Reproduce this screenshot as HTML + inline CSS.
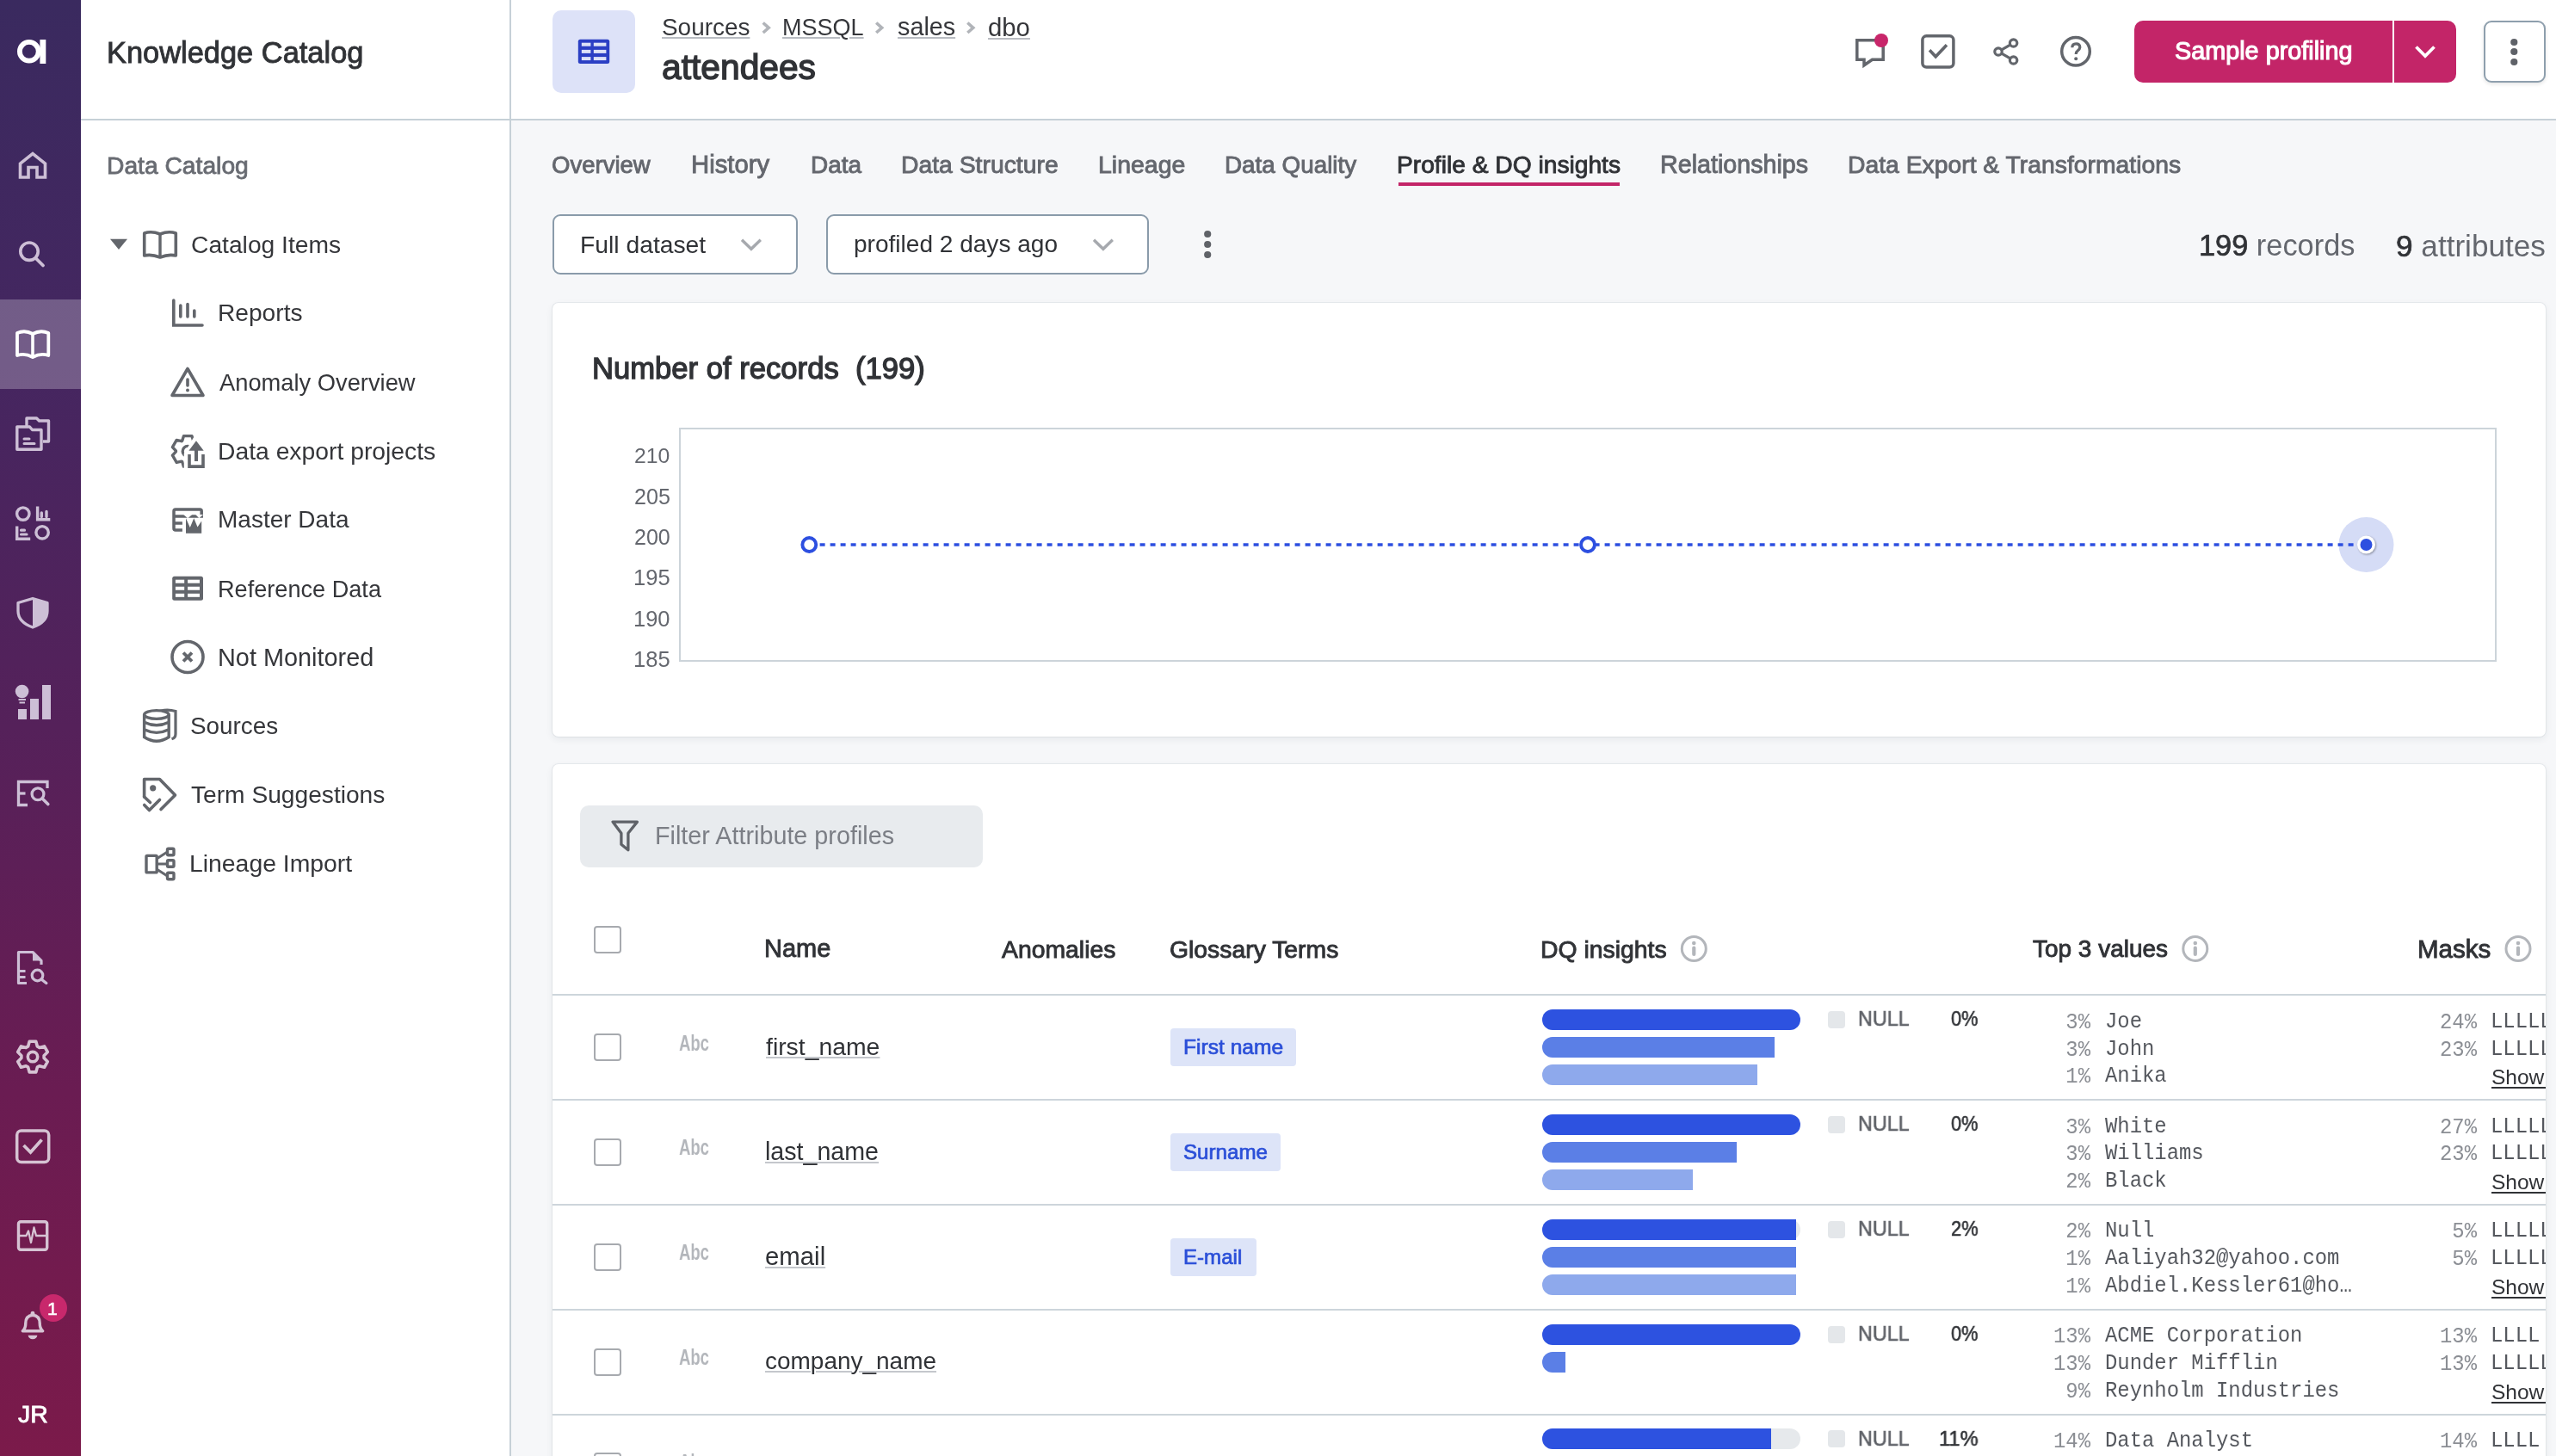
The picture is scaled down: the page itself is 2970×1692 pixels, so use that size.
<!DOCTYPE html>
<html><head><meta charset="utf-8"><style>
html,body{margin:0;padding:0;width:2970px;height:1692px;overflow:hidden;background:#f6f7f9;}
.t{position:absolute;line-height:1;white-space:nowrap;will-change:transform;}
</style></head><body>
<div style="position:absolute;left:0px;top:0px;width:94px;height:1692px;background:linear-gradient(180deg,#3a2a5f 0%,#452660 25%,#55215a 50%,#6a1c52 75%,#7b1a4a 100%)"></div><div style="position:absolute;left:0px;top:348px;width:94px;height:104px;background:rgba(255,255,255,0.25)"></div><div style="position:absolute;left:21px;top:823.5px;width:10px;height:12.5px;background:#cdbfd6"></div><div style="position:absolute;left:35px;top:812px;width:9.5px;height:24px;background:#cdbfd6"></div><div style="position:absolute;left:49px;top:796px;width:9.5px;height:40px;background:#cdbfd6"></div><div style="position:absolute;left:45.8px;top:1503.8px;width:32px;height:32px;background:#c8286c;border-radius:50%"></div><div class="t" style="left:55.01px;top:1509.62px;font-size:21.00px;color:#fff;font-weight:400;font-family:'Liberation Sans';-webkit-text-stroke:0.6px #fff;transform:scaleX(1.0071);transform-origin:0 0;">1</div><div class="t" style="left:20.57px;top:1628.92px;font-size:28.45px;color:#fff;font-weight:400;font-family:'Liberation Sans';-webkit-text-stroke:0.8px #fff;">JR</div><div style="position:absolute;left:94px;top:0px;width:499px;height:1692px;background:#fff"></div><div style="position:absolute;left:592px;top:0px;width:2px;height:1692px;background:#c6d0d7"></div><div style="position:absolute;left:94px;top:138px;width:499px;height:2px;background:#c6d0d7"></div><div class="t" style="left:123.65px;top:43.66px;font-size:34.42px;color:#303236;font-weight:400;font-family:'Liberation Sans';-webkit-text-stroke:0.9px #303236;">Knowledge Catalog</div><div class="t" style="left:124.14px;top:178.09px;font-size:28.24px;color:#686b72;font-weight:400;font-family:'Liberation Sans';-webkit-text-stroke:0.8px #686b72;">Data Catalog</div><div class="t" style="left:221.59px;top:270.10px;font-size:28.23px;color:#35363a;font-weight:400;font-family:'Liberation Sans';">Catalog Items</div><div class="t" style="left:252.75px;top:350.17px;font-size:28.15px;color:#35363a;font-weight:400;font-family:'Liberation Sans';">Reports</div><div class="t" style="left:255.00px;top:430.89px;font-size:27.30px;color:#35363a;font-weight:400;font-family:'Liberation Sans';">Anomaly Overview</div><div class="t" style="left:252.74px;top:509.64px;font-size:28.30px;color:#35363a;font-weight:400;font-family:'Liberation Sans';">Data export projects</div><div class="t" style="left:252.76px;top:590.30px;font-size:28.00px;color:#35363a;font-weight:400;font-family:'Liberation Sans';">Master Data</div><div class="t" style="left:252.83px;top:670.53px;font-size:27.13px;color:#35363a;font-weight:400;font-family:'Liberation Sans';">Reference Data</div><div class="t" style="left:252.69px;top:749.56px;font-size:28.87px;color:#35363a;font-weight:400;font-family:'Liberation Sans';">Not Monitored</div><div style="position:absolute;left:226.1px;top:523px;width:3.7px;height:13px;background:#63666c"></div><div class="t" style="left:221.25px;top:830.42px;font-size:27.86px;color:#35363a;font-weight:400;font-family:'Liberation Sans';">Sources</div><div class="t" style="left:221.94px;top:909.76px;font-size:28.16px;color:#35363a;font-weight:400;font-family:'Liberation Sans';">Term Suggestions</div><div class="t" style="left:220.23px;top:989.48px;font-size:28.37px;color:#35363a;font-weight:400;font-family:'Liberation Sans';">Lineage Import</div><div style="position:absolute;left:594px;top:0px;width:2376px;height:138px;background:#fff"></div><div style="position:absolute;left:594px;top:138px;width:2376px;height:2px;background:#c6d0d7"></div><div style="position:absolute;left:594px;top:140px;width:2376px;height:1552px;background:#f6f7f9"></div><div style="position:absolute;left:642px;top:12px;width:96px;height:96px;background:#dde2f8;border-radius:10px"></div><div class="t" style="left:769.14px;top:18.17px;font-size:27.91px;color:#35363a;font-weight:400;font-family:'Liberation Sans';text-decoration:underline;text-decoration-color:#b9bcc2;text-underline-offset:2px;text-decoration-thickness:1.5px;">Sources</div><div class="t" style="left:909.04px;top:18.93px;font-size:27.02px;color:#35363a;font-weight:400;font-family:'Liberation Sans';text-decoration:underline;text-decoration-color:#b9bcc2;text-underline-offset:2px;text-decoration-thickness:1.5px;">MSSQL</div><div class="t" style="left:1042.74px;top:17.45px;font-size:28.77px;color:#35363a;font-weight:400;font-family:'Liberation Sans';text-decoration:underline;text-decoration-color:#b9bcc2;text-underline-offset:2px;text-decoration-thickness:1.5px;">sales</div><div class="t" style="left:1148.03px;top:16.96px;font-size:29.34px;color:#35363a;font-weight:400;font-family:'Liberation Sans';text-decoration:underline;text-decoration-color:#b9bcc2;text-underline-offset:2px;text-decoration-thickness:1.5px;">dbo</div><div class="t" style="left:769.17px;top:58.20px;font-size:40.76px;color:#303236;font-weight:400;font-family:'Liberation Sans';-webkit-text-stroke:1.4px #303236;">attendees</div><div style="position:absolute;left:2480px;top:24px;width:374px;height:72px;background:#c32568;border-radius:10px"></div><div style="position:absolute;left:2779.5px;top:24px;width:2px;height:72px;background:#fff"></div><div class="t" style="left:2527.00px;top:44.82px;font-size:28.80px;color:#ffffff;font-weight:400;font-family:'Liberation Sans';-webkit-text-stroke:1.1px #ffffff;">Sample profiling</div><div style="position:absolute;left:2886px;top:24px;width:72px;height:72px;background:#fff;border:2px solid #8e9fad;border-radius:9px;box-sizing:border-box;box-shadow:0 2px 4px rgba(0,0,0,0.10)"></div><div class="t" style="left:641.46px;top:178.00px;font-size:27.52px;color:#64676e;font-weight:400;font-family:'Liberation Sans';-webkit-text-stroke:0.9px #64676e;">Overview</div><div class="t" style="left:803.36px;top:176.52px;font-size:29.27px;color:#64676e;font-weight:400;font-family:'Liberation Sans';-webkit-text-stroke:0.9px #64676e;">History</div><div class="t" style="left:941.57px;top:177.66px;font-size:27.93px;color:#64676e;font-weight:400;font-family:'Liberation Sans';-webkit-text-stroke:0.9px #64676e;">Data</div><div class="t" style="left:1047.33px;top:177.31px;font-size:28.34px;color:#64676e;font-weight:400;font-family:'Liberation Sans';-webkit-text-stroke:0.9px #64676e;">Data Structure</div><div class="t" style="left:1276.02px;top:177.20px;font-size:28.47px;color:#64676e;font-weight:400;font-family:'Liberation Sans';-webkit-text-stroke:0.9px #64676e;">Lineage</div><div class="t" style="left:1422.77px;top:177.72px;font-size:27.85px;color:#64676e;font-weight:400;font-family:'Liberation Sans';-webkit-text-stroke:0.9px #64676e;">Data Quality</div><div class="t" style="left:1622.74px;top:177.43px;font-size:28.20px;color:#303236;font-weight:400;font-family:'Liberation Sans';-webkit-text-stroke:0.9px #303236;">Profile &amp; DQ insights</div><div class="t" style="left:1928.51px;top:177.02px;font-size:28.68px;color:#64676e;font-weight:400;font-family:'Liberation Sans';-webkit-text-stroke:0.9px #64676e;">Relationships</div><div class="t" style="left:2146.93px;top:177.33px;font-size:28.32px;color:#64676e;font-weight:400;font-family:'Liberation Sans';-webkit-text-stroke:0.9px #64676e;">Data Export &amp; Transformations</div><div style="position:absolute;left:1625px;top:212px;width:257px;height:4px;background:#c32568"></div><div style="position:absolute;left:642px;top:248.6px;width:285px;height:70.7px;background:#fff;border:2px solid #8a9baa;border-radius:9px;box-sizing:border-box"></div><div class="t" style="left:674.24px;top:269.55px;font-size:28.29px;color:#303236;font-weight:400;font-family:'Liberation Sans';">Full dataset</div><div style="position:absolute;left:959.6px;top:248.6px;width:375px;height:70.7px;background:#fff;border:2px solid #8a9baa;border-radius:9px;box-sizing:border-box"></div><div class="t" style="left:992.18px;top:269.76px;font-size:28.05px;color:#303236;font-weight:400;font-family:'Liberation Sans';">profiled 2 days ago</div><div class="t" style="left:2555.42px;top:268.21px;font-size:34.37px;color:#64676e;font-weight:400;font-family:'Liberation Sans';"><span style="color:#303236;-webkit-text-stroke:0.7px #303236">199</span> records</div><div class="t" style="left:2784.42px;top:267.53px;font-size:35.17px;color:#64676e;font-weight:400;font-family:'Liberation Sans';"><span style="color:#303236;-webkit-text-stroke:0.7px #303236">9</span> attributes</div><div style="position:absolute;left:642px;top:352px;width:2316px;height:504px;background:#fff;border-radius:7px;box-shadow:0 0 0 1px rgba(60,80,100,0.07),0 3px 9px rgba(40,60,80,0.08)"></div><div class="t" style="left:687.73px;top:410.69px;font-size:34.63px;color:#303236;font-weight:400;font-family:'Liberation Sans';-webkit-text-stroke:1.3px #303236;">Number of records&nbsp; (199)</div><div style="position:absolute;left:789px;top:497px;width:2112px;height:272px;border:2px solid #ccd4da;box-sizing:border-box"></div><div class="t" style="left:737.26px;top:517.55px;font-size:24.75px;color:#64676e;font-weight:400;font-family:'Liberation Sans';">210</div><div class="t" style="left:736.74px;top:564.72px;font-size:25.14px;color:#64676e;font-weight:400;font-family:'Liberation Sans';">205</div><div class="t" style="left:736.75px;top:612.29px;font-size:25.06px;color:#64676e;font-weight:400;font-family:'Liberation Sans';">200</div><div class="t" style="left:736.08px;top:659.37px;font-size:25.55px;color:#64676e;font-weight:400;font-family:'Liberation Sans';">195</div><div class="t" style="left:736.09px;top:706.94px;font-size:25.47px;color:#64676e;font-weight:400;font-family:'Liberation Sans';">190</div><div class="t" style="left:736.08px;top:754.37px;font-size:25.55px;color:#64676e;font-weight:400;font-family:'Liberation Sans';">185</div><div style="position:absolute;left:642px;top:888px;width:2316px;height:900px;background:#fff;border-radius:7px;box-shadow:0 0 0 1px rgba(60,80,100,0.07),0 3px 9px rgba(40,60,80,0.08);overflow:hidden"><div style="position:absolute;left:32px;top:48px;width:468px;height:72px;background:#e8ebee;border-radius:10px"></div><div class="t" style="left:118.70px;top:68.96px;font-size:28.75px;color:#7b7e85;font-weight:400;font-family:'Liberation Sans';">Filter Attribute profiles</div><div style="position:absolute;left:48px;top:188px;width:32px;height:32px;border:2px solid #a7aaaf;border-radius:4px;box-sizing:border-box"></div><div class="t" style="left:246.28px;top:200.47px;font-size:28.98px;color:#303236;font-weight:400;font-family:'Liberation Sans';-webkit-text-stroke:0.9px #303236;">Name</div><div class="t" style="left:521.70px;top:200.98px;font-size:28.37px;color:#303236;font-weight:400;font-family:'Liberation Sans';-webkit-text-stroke:0.9px #303236;">Anomalies</div><div class="t" style="left:717.38px;top:201.00px;font-size:28.35px;color:#303236;font-weight:400;font-family:'Liberation Sans';-webkit-text-stroke:0.9px #303236;">Glossary Terms</div><div class="t" style="left:1147.63px;top:200.98px;font-size:28.37px;color:#303236;font-weight:400;font-family:'Liberation Sans';-webkit-text-stroke:0.9px #303236;">DQ insights</div><div class="t" style="left:1720.44px;top:201.32px;font-size:27.97px;color:#303236;font-weight:400;font-family:'Liberation Sans';-webkit-text-stroke:0.9px #303236;">Top 3 values</div><div class="t" style="left:2166.64px;top:199.99px;font-size:29.55px;color:#303236;font-weight:400;font-family:'Liberation Sans';-webkit-text-stroke:0.9px #303236;">Masks</div><div style="position:absolute;left:0px;top:267px;width:2316px;height:2px;background:#cdd5db"></div><div style="position:absolute;left:48px;top:313.0px;width:32px;height:32px;border:2px solid #a7aaaf;border-radius:4px;box-sizing:border-box"></div><div class="t" style="left:146.80px;top:311.64px;font-size:25.00px;color:#b3b6bb;font-weight:700;font-family:'Liberation Sans';transform:scaleX(0.74);transform-origin:0 0">Abc</div><div class="t" style="left:248.17px;top:314.29px;font-size:28.36px;color:#303236;font-weight:400;font-family:'Liberation Sans';text-decoration:underline;text-decoration-color:#c4c7cc;text-underline-offset:1.5px;text-decoration-thickness:1.6px">first_name</div><div style="position:absolute;left:718px;top:307.0px;width:146px;height:44px;background:#dde4f8;border-radius:4px"></div><div class="t" style="left:732.73px;top:317.17px;font-size:24.61px;color:#2b4fd8;font-weight:400;font-family:'Liberation Sans';-webkit-text-stroke:0.7px #2b4fd8;">First name</div><div style="position:absolute;left:1150px;top:285.0px;width:300px;height:24px;background:#2d52e0;border-radius:12px"></div><div style="position:absolute;left:1150px;top:317.0px;width:270px;height:24px;background:#5b7fe6;border-radius:12px 0 0 12px"></div><div style="position:absolute;left:1150px;top:349.0px;width:250px;height:24px;background:#8ea9ec;border-radius:12px 0 0 12px"></div><div style="position:absolute;left:1482px;top:287.0px;width:20px;height:20px;background:#e4e7ea;border-radius:4px"></div><div class="t" style="left:1517.03px;top:284.26px;font-size:24.50px;color:#5f6268;font-weight:400;font-family:'Liberation Sans';-webkit-text-stroke:0.6px #5f6268;transform:scaleX(0.9515);transform-origin:0 0;">NULL</div><div class="t" style="left:1624.93px;top:284.26px;font-size:24.50px;color:#303236;font-weight:400;font-family:'Liberation Sans';-webkit-text-stroke:0.6px #303236;transform:scaleX(0.8849);transform-origin:0 0;">0%</div><div class="t" style="left:1787.00px;top:287.69px;font-size:23.90px;color:#8b8e94;font-weight:400;font-family:'Liberation Mono';width:0;transform:scaleY(1.07);transform-origin:0 76.65%"><span style="position:absolute;right:0">3%</span></div><div class="t" style="left:1803.80px;top:287.69px;font-size:23.90px;color:#55585e;font-weight:400;font-family:'Liberation Mono';transform:scaleY(1.07);transform-origin:0 76.65%">Joe</div><div class="t" style="left:1787.00px;top:319.54px;font-size:23.90px;color:#8b8e94;font-weight:400;font-family:'Liberation Mono';width:0;transform:scaleY(1.07);transform-origin:0 76.65%"><span style="position:absolute;right:0">3%</span></div><div class="t" style="left:1803.80px;top:319.54px;font-size:23.90px;color:#55585e;font-weight:400;font-family:'Liberation Mono';transform:scaleY(1.07);transform-origin:0 76.65%">John</div><div class="t" style="left:1787.00px;top:351.39px;font-size:23.90px;color:#8b8e94;font-weight:400;font-family:'Liberation Mono';width:0;transform:scaleY(1.07);transform-origin:0 76.65%"><span style="position:absolute;right:0">1%</span></div><div class="t" style="left:1803.80px;top:351.39px;font-size:23.90px;color:#55585e;font-weight:400;font-family:'Liberation Mono';transform:scaleY(1.07);transform-origin:0 76.65%">Anika</div><div class="t" style="left:2235.50px;top:287.69px;font-size:23.90px;color:#8b8e94;font-weight:400;font-family:'Liberation Mono';width:0;transform:scaleY(1.07);transform-origin:0 76.65%"><span style="position:absolute;right:0">24%</span></div><div class="t" style="left:2251.80px;top:287.69px;font-size:23.90px;color:#55585e;font-weight:400;font-family:'Liberation Mono';transform:scaleY(1.07);transform-origin:0 76.65%">LLLLL</div><div class="t" style="left:2235.50px;top:319.54px;font-size:23.90px;color:#8b8e94;font-weight:400;font-family:'Liberation Mono';width:0;transform:scaleY(1.07);transform-origin:0 76.65%"><span style="position:absolute;right:0">23%</span></div><div class="t" style="left:2251.80px;top:319.54px;font-size:23.90px;color:#55585e;font-weight:400;font-family:'Liberation Mono';transform:scaleY(1.07);transform-origin:0 76.65%">LLLLL</div><div class="t" style="left:2253.00px;top:351.96px;font-size:24.50px;color:#303236;font-weight:400;font-family:'Liberation Sans';text-decoration:underline;text-underline-offset:3px;text-decoration-thickness:2px">Show more</div><div style="position:absolute;left:0px;top:389.0px;width:2316px;height:2px;background:#cdd5db"></div><div style="position:absolute;left:48px;top:434.8499999999999px;width:32px;height:32px;border:2px solid #a7aaaf;border-radius:4px;box-sizing:border-box"></div><div class="t" style="left:146.80px;top:433.49px;font-size:25.00px;color:#b3b6bb;font-weight:700;font-family:'Liberation Sans';transform:scaleX(0.74);transform-origin:0 0">Abc</div><div class="t" style="left:246.74px;top:435.93px;font-size:28.61px;color:#303236;font-weight:400;font-family:'Liberation Sans';text-decoration:underline;text-decoration-color:#c4c7cc;text-underline-offset:1.5px;text-decoration-thickness:1.6px">last_name</div><div style="position:absolute;left:718px;top:428.8499999999999px;width:128px;height:44px;background:#dde4f8;border-radius:4px"></div><div class="t" style="left:733.31px;top:439.40px;font-size:24.16px;color:#2b4fd8;font-weight:400;font-family:'Liberation Sans';-webkit-text-stroke:0.7px #2b4fd8;">Surname</div><div style="position:absolute;left:1150px;top:406.8499999999999px;width:300px;height:24px;background:#2d52e0;border-radius:12px"></div><div style="position:absolute;left:1150px;top:438.8499999999999px;width:226px;height:24px;background:#5b7fe6;border-radius:12px 0 0 12px"></div><div style="position:absolute;left:1150px;top:470.8499999999999px;width:175px;height:24px;background:#8ea9ec;border-radius:12px 0 0 12px"></div><div style="position:absolute;left:1482px;top:408.8499999999999px;width:20px;height:20px;background:#e4e7ea;border-radius:4px"></div><div class="t" style="left:1517.03px;top:406.11px;font-size:24.50px;color:#5f6268;font-weight:400;font-family:'Liberation Sans';-webkit-text-stroke:0.6px #5f6268;transform:scaleX(0.9515);transform-origin:0 0;">NULL</div><div class="t" style="left:1624.93px;top:406.11px;font-size:24.50px;color:#303236;font-weight:400;font-family:'Liberation Sans';-webkit-text-stroke:0.6px #303236;transform:scaleX(0.8849);transform-origin:0 0;">0%</div><div class="t" style="left:1787.00px;top:409.54px;font-size:23.90px;color:#8b8e94;font-weight:400;font-family:'Liberation Mono';width:0;transform:scaleY(1.07);transform-origin:0 76.65%"><span style="position:absolute;right:0">3%</span></div><div class="t" style="left:1803.80px;top:409.54px;font-size:23.90px;color:#55585e;font-weight:400;font-family:'Liberation Mono';transform:scaleY(1.07);transform-origin:0 76.65%">White</div><div class="t" style="left:1787.00px;top:441.39px;font-size:23.90px;color:#8b8e94;font-weight:400;font-family:'Liberation Mono';width:0;transform:scaleY(1.07);transform-origin:0 76.65%"><span style="position:absolute;right:0">3%</span></div><div class="t" style="left:1803.80px;top:441.39px;font-size:23.90px;color:#55585e;font-weight:400;font-family:'Liberation Mono';transform:scaleY(1.07);transform-origin:0 76.65%">Williams</div><div class="t" style="left:1787.00px;top:473.24px;font-size:23.90px;color:#8b8e94;font-weight:400;font-family:'Liberation Mono';width:0;transform:scaleY(1.07);transform-origin:0 76.65%"><span style="position:absolute;right:0">2%</span></div><div class="t" style="left:1803.80px;top:473.24px;font-size:23.90px;color:#55585e;font-weight:400;font-family:'Liberation Mono';transform:scaleY(1.07);transform-origin:0 76.65%">Black</div><div class="t" style="left:2235.50px;top:409.54px;font-size:23.90px;color:#8b8e94;font-weight:400;font-family:'Liberation Mono';width:0;transform:scaleY(1.07);transform-origin:0 76.65%"><span style="position:absolute;right:0">27%</span></div><div class="t" style="left:2251.80px;top:409.54px;font-size:23.90px;color:#55585e;font-weight:400;font-family:'Liberation Mono';transform:scaleY(1.07);transform-origin:0 76.65%">LLLLL</div><div class="t" style="left:2235.50px;top:441.39px;font-size:23.90px;color:#8b8e94;font-weight:400;font-family:'Liberation Mono';width:0;transform:scaleY(1.07);transform-origin:0 76.65%"><span style="position:absolute;right:0">23%</span></div><div class="t" style="left:2251.80px;top:441.39px;font-size:23.90px;color:#55585e;font-weight:400;font-family:'Liberation Mono';transform:scaleY(1.07);transform-origin:0 76.65%">LLLLL</div><div class="t" style="left:2253.00px;top:473.81px;font-size:24.50px;color:#303236;font-weight:400;font-family:'Liberation Sans';text-decoration:underline;text-underline-offset:3px;text-decoration-thickness:2px">Show more</div><div style="position:absolute;left:0px;top:510.8499999999999px;width:2316px;height:2px;background:#cdd5db"></div><div style="position:absolute;left:48px;top:556.7px;width:32px;height:32px;border:2px solid #a7aaaf;border-radius:4px;box-sizing:border-box"></div><div class="t" style="left:146.80px;top:555.34px;font-size:25.00px;color:#b3b6bb;font-weight:700;font-family:'Liberation Sans';transform:scaleX(0.74);transform-origin:0 0">Abc</div><div class="t" style="left:247.43px;top:557.14px;font-size:29.37px;color:#303236;font-weight:400;font-family:'Liberation Sans';text-decoration:underline;text-decoration-color:#c4c7cc;text-underline-offset:1.5px;text-decoration-thickness:1.6px">email</div><div style="position:absolute;left:718px;top:550.7px;width:100px;height:44px;background:#dde4f8;border-radius:4px"></div><div class="t" style="left:733.47px;top:561.30px;font-size:24.10px;color:#2b4fd8;font-weight:400;font-family:'Liberation Sans';-webkit-text-stroke:0.7px #2b4fd8;">E-mail</div><div style="position:absolute;left:1150px;top:528.7px;width:300px;height:24px;background:#e6e9ec;border-radius:12px"></div><div style="position:absolute;left:1150px;top:528.7px;width:295px;height:24px;background:#2d52e0;border-radius:12px 0 0 12px"></div><div style="position:absolute;left:1150px;top:560.7px;width:295px;height:24px;background:#5b7fe6;border-radius:12px 0 0 12px"></div><div style="position:absolute;left:1150px;top:592.7px;width:295px;height:24px;background:#8ea9ec;border-radius:12px 0 0 12px"></div><div style="position:absolute;left:1482px;top:530.7px;width:20px;height:20px;background:#e4e7ea;border-radius:4px"></div><div class="t" style="left:1517.03px;top:527.96px;font-size:24.50px;color:#5f6268;font-weight:400;font-family:'Liberation Sans';-webkit-text-stroke:0.6px #5f6268;transform:scaleX(0.9515);transform-origin:0 0;">NULL</div><div class="t" style="left:1624.71px;top:527.96px;font-size:24.50px;color:#303236;font-weight:400;font-family:'Liberation Sans';-webkit-text-stroke:0.6px #303236;transform:scaleX(0.8914);transform-origin:0 0;">2%</div><div class="t" style="left:1787.00px;top:531.39px;font-size:23.90px;color:#8b8e94;font-weight:400;font-family:'Liberation Mono';width:0;transform:scaleY(1.07);transform-origin:0 76.65%"><span style="position:absolute;right:0">2%</span></div><div class="t" style="left:1803.80px;top:531.39px;font-size:23.90px;color:#55585e;font-weight:400;font-family:'Liberation Mono';transform:scaleY(1.07);transform-origin:0 76.65%">Null</div><div class="t" style="left:1787.00px;top:563.24px;font-size:23.90px;color:#8b8e94;font-weight:400;font-family:'Liberation Mono';width:0;transform:scaleY(1.07);transform-origin:0 76.65%"><span style="position:absolute;right:0">1%</span></div><div class="t" style="left:1803.80px;top:563.24px;font-size:23.90px;color:#55585e;font-weight:400;font-family:'Liberation Mono';transform:scaleY(1.07);transform-origin:0 76.65%">Aaliyah32@yahoo.com</div><div class="t" style="left:1787.00px;top:595.09px;font-size:23.90px;color:#8b8e94;font-weight:400;font-family:'Liberation Mono';width:0;transform:scaleY(1.07);transform-origin:0 76.65%"><span style="position:absolute;right:0">1%</span></div><div class="t" style="left:1803.80px;top:595.09px;font-size:23.90px;color:#55585e;font-weight:400;font-family:'Liberation Mono';transform:scaleY(1.07);transform-origin:0 76.65%">Abdiel.Kessler61@ho…</div><div class="t" style="left:2235.50px;top:531.39px;font-size:23.90px;color:#8b8e94;font-weight:400;font-family:'Liberation Mono';width:0;transform:scaleY(1.07);transform-origin:0 76.65%"><span style="position:absolute;right:0">5%</span></div><div class="t" style="left:2251.80px;top:531.39px;font-size:23.90px;color:#55585e;font-weight:400;font-family:'Liberation Mono';transform:scaleY(1.07);transform-origin:0 76.65%">LLLLL</div><div class="t" style="left:2235.50px;top:563.24px;font-size:23.90px;color:#8b8e94;font-weight:400;font-family:'Liberation Mono';width:0;transform:scaleY(1.07);transform-origin:0 76.65%"><span style="position:absolute;right:0">5%</span></div><div class="t" style="left:2251.80px;top:563.24px;font-size:23.90px;color:#55585e;font-weight:400;font-family:'Liberation Mono';transform:scaleY(1.07);transform-origin:0 76.65%">LLLLL</div><div class="t" style="left:2253.00px;top:595.66px;font-size:24.50px;color:#303236;font-weight:400;font-family:'Liberation Sans';text-decoration:underline;text-underline-offset:3px;text-decoration-thickness:2px">Show more</div><div style="position:absolute;left:0px;top:632.7px;width:2316px;height:2px;background:#cdd5db"></div><div style="position:absolute;left:48px;top:678.55px;width:32px;height:32px;border:2px solid #a7aaaf;border-radius:4px;box-sizing:border-box"></div><div class="t" style="left:146.80px;top:677.19px;font-size:25.00px;color:#b3b6bb;font-weight:700;font-family:'Liberation Sans';transform:scaleX(0.74);transform-origin:0 0">Abc</div><div class="t" style="left:247.48px;top:680.16px;font-size:27.98px;color:#303236;font-weight:400;font-family:'Liberation Sans';text-decoration:underline;text-decoration-color:#c4c7cc;text-underline-offset:1.5px;text-decoration-thickness:1.6px">company_name</div><div style="position:absolute;left:1150px;top:650.55px;width:300px;height:24px;background:#2d52e0;border-radius:12px"></div><div style="position:absolute;left:1150px;top:682.55px;width:27px;height:24px;background:#5b7fe6;border-radius:12px 0 0 12px"></div><div style="position:absolute;left:1482px;top:652.55px;width:20px;height:20px;background:#e4e7ea;border-radius:4px"></div><div class="t" style="left:1517.03px;top:649.81px;font-size:24.50px;color:#5f6268;font-weight:400;font-family:'Liberation Sans';-webkit-text-stroke:0.6px #5f6268;transform:scaleX(0.9515);transform-origin:0 0;">NULL</div><div class="t" style="left:1624.93px;top:649.81px;font-size:24.50px;color:#303236;font-weight:400;font-family:'Liberation Sans';-webkit-text-stroke:0.6px #303236;transform:scaleX(0.8849);transform-origin:0 0;">0%</div><div class="t" style="left:1787.00px;top:653.24px;font-size:23.90px;color:#8b8e94;font-weight:400;font-family:'Liberation Mono';width:0;transform:scaleY(1.07);transform-origin:0 76.65%"><span style="position:absolute;right:0">13%</span></div><div class="t" style="left:1803.80px;top:653.24px;font-size:23.90px;color:#55585e;font-weight:400;font-family:'Liberation Mono';transform:scaleY(1.07);transform-origin:0 76.65%">ACME Corporation</div><div class="t" style="left:1787.00px;top:685.09px;font-size:23.90px;color:#8b8e94;font-weight:400;font-family:'Liberation Mono';width:0;transform:scaleY(1.07);transform-origin:0 76.65%"><span style="position:absolute;right:0">13%</span></div><div class="t" style="left:1803.80px;top:685.09px;font-size:23.90px;color:#55585e;font-weight:400;font-family:'Liberation Mono';transform:scaleY(1.07);transform-origin:0 76.65%">Dunder Mifflin</div><div class="t" style="left:1787.00px;top:716.94px;font-size:23.90px;color:#8b8e94;font-weight:400;font-family:'Liberation Mono';width:0;transform:scaleY(1.07);transform-origin:0 76.65%"><span style="position:absolute;right:0">9%</span></div><div class="t" style="left:1803.80px;top:716.94px;font-size:23.90px;color:#55585e;font-weight:400;font-family:'Liberation Mono';transform:scaleY(1.07);transform-origin:0 76.65%">Reynholm Industries</div><div class="t" style="left:2235.50px;top:653.24px;font-size:23.90px;color:#8b8e94;font-weight:400;font-family:'Liberation Mono';width:0;transform:scaleY(1.07);transform-origin:0 76.65%"><span style="position:absolute;right:0">13%</span></div><div class="t" style="left:2251.80px;top:653.24px;font-size:23.90px;color:#55585e;font-weight:400;font-family:'Liberation Mono';transform:scaleY(1.07);transform-origin:0 76.65%">LLLL</div><div class="t" style="left:2235.50px;top:685.09px;font-size:23.90px;color:#8b8e94;font-weight:400;font-family:'Liberation Mono';width:0;transform:scaleY(1.07);transform-origin:0 76.65%"><span style="position:absolute;right:0">13%</span></div><div class="t" style="left:2251.80px;top:685.09px;font-size:23.90px;color:#55585e;font-weight:400;font-family:'Liberation Mono';transform:scaleY(1.07);transform-origin:0 76.65%">LLLLL</div><div class="t" style="left:2253.00px;top:717.51px;font-size:24.50px;color:#303236;font-weight:400;font-family:'Liberation Sans';text-decoration:underline;text-underline-offset:3px;text-decoration-thickness:2px">Show more</div><div style="position:absolute;left:0px;top:754.55px;width:2316px;height:2px;background:#cdd5db"></div><div style="position:absolute;left:48px;top:800.4000000000001px;width:32px;height:32px;border:2px solid #a7aaaf;border-radius:4px;box-sizing:border-box"></div><div class="t" style="left:146.80px;top:799.04px;font-size:25.00px;color:#b3b6bb;font-weight:700;font-family:'Liberation Sans';transform:scaleX(0.74);transform-origin:0 0">Abc</div><div style="position:absolute;left:1150px;top:772.4000000000001px;width:300px;height:24px;background:#e6e9ec;border-radius:12px"></div><div style="position:absolute;left:1150px;top:772.4000000000001px;width:266px;height:24px;background:#2d52e0;border-radius:12px 0 0 12px"></div><div style="position:absolute;left:1482px;top:774.4000000000001px;width:20px;height:20px;background:#e4e7ea;border-radius:4px"></div><div class="t" style="left:1517.03px;top:771.66px;font-size:24.50px;color:#5f6268;font-weight:400;font-family:'Liberation Sans';-webkit-text-stroke:0.6px #5f6268;transform:scaleX(0.9515);transform-origin:0 0;">NULL</div><div class="t" style="left:1610.73px;top:771.66px;font-size:24.50px;color:#303236;font-weight:400;font-family:'Liberation Sans';-webkit-text-stroke:0.6px #303236;transform:scaleX(0.9643);transform-origin:0 0;">11%</div><div class="t" style="left:1787.00px;top:775.09px;font-size:23.90px;color:#8b8e94;font-weight:400;font-family:'Liberation Mono';width:0;transform:scaleY(1.07);transform-origin:0 76.65%"><span style="position:absolute;right:0">14%</span></div><div class="t" style="left:1803.80px;top:775.09px;font-size:23.90px;color:#55585e;font-weight:400;font-family:'Liberation Mono';transform:scaleY(1.07);transform-origin:0 76.65%">Data Analyst</div><div class="t" style="left:2235.50px;top:775.09px;font-size:23.90px;color:#8b8e94;font-weight:400;font-family:'Liberation Mono';width:0;transform:scaleY(1.07);transform-origin:0 76.65%"><span style="position:absolute;right:0">14%</span></div><div class="t" style="left:2251.80px;top:775.09px;font-size:23.90px;color:#55585e;font-weight:400;font-family:'Liberation Mono';transform:scaleY(1.07);transform-origin:0 76.65%">LLLL</div><div style="position:absolute;left:0px;top:876.4000000000001px;width:2316px;height:2px;background:#cdd5db"></div></div>
<svg style="position:absolute;left:0;top:0;pointer-events:none" width="2970" height="1692" viewBox="0 0 2970 1692"><circle cx="33.8" cy="59.8" r="10.9" fill="none" stroke="#fff" stroke-width="5.8"/><rect x="46.4" y="46" width="6.9" height="28" fill="#fff"/><path d="M23.5 206V190L38 178.5L52.5 190V206H43V194.5H33V206Z" fill="none" stroke="#cdbfd6" stroke-width="3.6" stroke-linejoin="miter"/><circle cx="34" cy="292.2" r="10.2" fill="none" stroke="#cdbfd6" stroke-width="3.6"/><path d="M41.5 300L50 308.5" fill="none" stroke="#cdbfd6" stroke-width="3.8" stroke-linecap="round"/><path d="M20 387Q29 383 38 388Q47 383 56.3 387V413Q47 410 38 415Q29 410 20 413Z" fill="none" stroke="#fff" stroke-width="3.8" stroke-linejoin="round"/><path d="M38 388V414" fill="none" stroke="#fff" stroke-width="3.6" /><path d="M31 496V486H42.5L45.5 489H56.5V513H50" fill="none" stroke="#cdbfd6" stroke-width="3.4" stroke-linejoin="round"/><path d="M19.8 496H34.5L37.5 499.5H48V522.3H19.8Z" fill="none" stroke="#cdbfd6" stroke-width="3.4" stroke-linejoin="round"/><path d="M28 510H34M28 515.5H40" fill="none" stroke="#cdbfd6" stroke-width="3" stroke-linecap="round"/><circle cx="26.8" cy="597.1" r="7.2" fill="none" stroke="#cdbfd6" stroke-width="3.4"/><circle cx="49.1" cy="618.8" r="7.2" fill="none" stroke="#cdbfd6" stroke-width="3.4"/><path d="M43.6 588.5V603.8H58.3" fill="none" stroke="#cdbfd6" stroke-width="3.4" /><path d="M48.3 596V600.5M54 594.5V600.5" fill="none" stroke="#cdbfd6" stroke-width="3.4" stroke-linecap="round"/><path d="M19.7 611.5V626.2H35.2" fill="none" stroke="#cdbfd6" stroke-width="3.4" /><path d="M24.5 616.2H28.5M24.5 621H31" fill="none" stroke="#cdbfd6" stroke-width="3.2" stroke-linecap="round"/><path d="M38 695.5L55 700.5V710Q55 723 38 729Q21 723 21 710V700.5Z" fill="none" stroke="#cdbfd6" stroke-width="3.3" stroke-linejoin="round"/><path d="M38 695.5L55 700.5V710Q55 723 38 729Z" fill="#cdbfd6" /><circle cx="25.6" cy="803.5" r="7.8" fill="#cdbfd6"/><path d="M21.5 813H30M22.5 816.5H29" fill="none" stroke="#cdbfd6" stroke-width="1.8" /><path d="M55 916V908.5H21.5V935.5H32" fill="none" stroke="#cdbfd6" stroke-width="3.3" /><path d="M21.5 922H29.5" fill="none" stroke="#cdbfd6" stroke-width="3.3" /><circle cx="44" cy="922.8" r="6.9" fill="none" stroke="#cdbfd6" stroke-width="3.3"/><path d="M49.2 928L55.8 934.5" fill="none" stroke="#cdbfd6" stroke-width="3.6" stroke-linecap="round"/><path d="M31 1142.5H21.5V1106.5H38L48 1116.5V1121" fill="none" stroke="#cdbfd6" stroke-width="3.2" stroke-linejoin="round"/><path d="M38 1106.5V1116.5H48Z" fill="#cdbfd6" /><path d="M21.5 1128.5H29.5M21.5 1135.5H29.5" fill="none" stroke="#cdbfd6" stroke-width="3" /><circle cx="43.5" cy="1133.5" r="6.3" fill="none" stroke="#cdbfd6" stroke-width="3.2"/><path d="M48 1138L53.8 1142.5" fill="none" stroke="#cdbfd6" stroke-width="3.4" stroke-linecap="round"/><path d="M32.63 1216.04 L34.22 1210.30 L41.78 1210.30 L43.37 1216.04 L45.76 1217.42 L51.53 1215.92 L55.31 1222.48 L51.13 1226.72 L51.13 1229.48 L55.31 1233.72 L51.53 1240.28 L45.76 1238.78 L43.37 1240.16 L41.78 1245.90 L34.22 1245.90 L32.63 1240.16 L30.24 1238.78 L24.47 1240.28 L20.69 1233.72 L24.87 1229.48 L24.87 1226.72 L20.69 1222.48 L24.47 1215.92 L30.24 1217.42Z" fill="none" stroke="#d6c3d3" stroke-width="3.6" stroke-linejoin="round"/><circle cx="38" cy="1228.1" r="5.7" fill="none" stroke="#d6c3d3" stroke-width="3.6"/><rect x="19.7" y="1314" width="37" height="36.5" rx="5" fill="none" stroke="#d6c3d3" stroke-width="3.5"/><path d="M27.5 1331L35.5 1339L48.5 1324.5" fill="none" stroke="#d6c3d3" stroke-width="3.8" /><rect x="21.5" y="1419.7" width="33.2" height="32.6" rx="2.5" fill="none" stroke="#d6c3d3" stroke-width="3.4"/><path d="M22 1436H30.5L33 1430.5L36 1444L39.5 1426.5L42 1436H54" fill="none" stroke="#d6c3d3" stroke-width="2.3" stroke-linejoin="round"/><path d="M26.3 1546.8Q29.8 1544 29.8 1537.5Q29.8 1529 38 1528.2Q46.2 1529 46.2 1537.5Q46.2 1544 49.7 1546.8Z" fill="none" stroke="#d6c3d3" stroke-width="3.4" stroke-linejoin="round"/><path d="M32.6 1551.8H43.4Q42.6 1556.2 38 1556.2Q33.4 1556.2 32.6 1551.8Z" fill="#d6c3d3" /><circle cx="38" cy="1526.2" r="2.4" fill="#d6c3d3"/><path d="M128 277.7H148L138 290Z" fill="#63666c" /><path d="M167.7 271Q176 268 186 272Q196 268 204.3 271V297Q196 295 186 299Q176 295 167.7 297Z" fill="none" stroke="#63666c" stroke-width="3.6" stroke-linejoin="round"/><path d="M186 272V298" fill="none" stroke="#63666c" stroke-width="3.4" /><path d="M201.8 349V378H235" fill="none" stroke="#63666c" stroke-width="3.6" stroke-linecap="round"/><path d="M209.8 355V368M218 353.5V368M225.8 361V368" fill="none" stroke="#63666c" stroke-width="3.6" stroke-linecap="round"/><path d="M218 428.5L236 459.5H200Z" fill="none" stroke="#63666c" stroke-width="3.6" stroke-linejoin="round"/><path d="M218 441V448" fill="none" stroke="#63666c" stroke-width="3.6" stroke-linecap="round"/><circle cx="218" cy="453.5" r="2" fill="#63666c"/><clipPath id="cpx"><polygon points="185,490 236,490 213.8,527 213.8,552 185,552"/></clipPath><g clip-path="url(#cpx)"><path d="M211.72 512.22 L213.44 506.63 L222.96 506.63 L224.68 512.22 L225.51 512.70 L231.21 511.39 L235.97 519.64 L231.99 523.92 L231.99 524.88 L235.97 529.16 L231.21 537.41 L225.51 536.10 L224.68 536.58 L222.96 542.17 L213.44 542.17 L211.72 536.58 L210.89 536.10 L205.19 537.41 L200.43 529.16 L204.41 524.88 L204.41 523.92 L200.43 519.64 L205.19 511.39 L210.89 512.70Z" fill="none" stroke="#63666c" stroke-width="3.4" stroke-linejoin="round"/><circle cx="218.2" cy="524.4" r="6.0" fill="none" stroke="#63666c" stroke-width="3.4"/></g><path d="M220 528V542.1H236V528" fill="none" stroke="#63666c" stroke-width="3.6" /><path d="M219.4 523.8L228 512.2L236.7 523.8Z" fill="#63666c" /><path d="M211.9 616H204Q202 616 202 614V594Q202 592 204 592H232.2Q234.2 592 234.2 594V599.9H202M202 607.9H211.9" fill="none" stroke="#63666c" stroke-width="3.5" /><path d="M216 619.7V602.3L220.8 613L225.3 602.3L229.5 612.5L234.2 605.5V619.7Z" fill="#63666c" /><path d="M213.2 597.9H223.2L218.2 602.2Z M227.3 597.9H236L231.4 602.2Z" fill="#fff" /><rect x="200.2" y="669.8" width="35.8" height="27.9" rx="2.5" fill="#63666c"/><rect x="203.9" y="673.7" width="10.3" height="4" fill="#fff"/><rect x="218.1" y="673.7" width="13.9" height="4" fill="#fff"/><rect x="203.9" y="681.75" width="10.3" height="4" fill="#fff"/><rect x="218.1" y="681.75" width="13.9" height="4" fill="#fff"/><rect x="203.9" y="689.8" width="10.3" height="4" fill="#fff"/><rect x="218.1" y="689.8" width="13.9" height="4" fill="#fff"/><circle cx="218" cy="763.5" r="18" fill="none" stroke="#63666c" stroke-width="3.6"/><path d="M213 758.5L223 768.5M223 758.5L213 768.5" fill="none" stroke="#63666c" stroke-width="3.8" /><path d="M179 828.5Q192 822.8 204 826.5V853Q204 857.5 199.5 858.8" fill="none" stroke="#63666c" stroke-width="3.2" /><path d="M201 836V839M201 844V847M201 852V854.5" fill="none" stroke="#fff" stroke-width="1.4" /><path d="M167.6 830.5V856Q181.9 866.5 196.2 856V830.5Z" fill="#fff" /><ellipse cx="181.9" cy="830.5" rx="14.3" ry="4.9" fill="#fff" stroke="#63666c" stroke-width="3.4"/><path d="M167.6 830.5V856.5Q181.9 866 196.2 856.5V830.5M167.6 839.2Q181.9 846.3 196.2 839.2M167.6 847.8Q181.9 854.9 196.2 847.8" fill="none" stroke="#63666c" stroke-width="3.4" /><path d="M167.6 926V905.5H185.5L203.5 924L187 940.5" fill="none" stroke="#63666c" stroke-width="3.6" stroke-linejoin="round" stroke-linecap="round"/><path d="M167.6 926L174.5 932.5" fill="none" stroke="#63666c" stroke-width="3.6" stroke-linecap="round"/><circle cx="177.7" cy="915.8" r="3.6" fill="#63666c"/><path d="M167.7 935.5L173.5 941.5L185.5 929.5" fill="none" stroke="#63666c" stroke-width="3.6" stroke-linecap="round" stroke-linejoin="round"/><rect x="170" y="994.4" width="12.2" height="19.5" rx="1" fill="none" stroke="#63666c" stroke-width="3.4"/><rect x="194.5" y="986.2" width="7.5" height="7.5" rx="1.2" fill="none" stroke="#63666c" stroke-width="3.4"/><rect x="194.5" y="999.8" width="7.5" height="7.5" rx="1.2" fill="none" stroke="#63666c" stroke-width="3.4"/><rect x="194.5" y="1014.2" width="7.5" height="7.5" rx="1.2" fill="none" stroke="#63666c" stroke-width="3.4"/><path d="M182 1004H194.5M182 998L194.5 990M182 1010L194.5 1018" fill="none" stroke="#63666c" stroke-width="3" /><rect x="671.8" y="45.8" width="36.4" height="28.2" rx="2.5" fill="#2b3fc4"/><rect x="675.8" y="49.7" width="10.6" height="4" fill="#dde2f8"/><rect x="689.8" y="49.7" width="14.6" height="4" fill="#dde2f8"/><rect x="675.8" y="57.9" width="10.6" height="4" fill="#dde2f8"/><rect x="689.8" y="57.9" width="14.6" height="4" fill="#dde2f8"/><rect x="675.8" y="66.1" width="10.6" height="4" fill="#dde2f8"/><rect x="689.8" y="66.1" width="14.6" height="4" fill="#dde2f8"/><path d="M886.7 26.5L893.2 32.3L886.7 38" fill="none" stroke="#b1b4b9" stroke-width="3.6" /><path d="M1018.2 26.5L1024.7 32.3L1018.2 38" fill="none" stroke="#b1b4b9" stroke-width="3.6" /><path d="M1124.3 26.5L1130.8 32.3L1124.3 38" fill="none" stroke="#b1b4b9" stroke-width="3.6" /><path d="M2157.8 46.8H2188.2V69.2H2175.5L2166 75.8V69.2H2157.8Z" fill="none" stroke="#63666c" stroke-width="3.5" stroke-linejoin="miter" stroke-miterlimit="10"/><circle cx="2186" cy="47" r="8" fill="#c8266a"/><rect x="2233.9" y="41.8" width="36" height="36.3" rx="4.5" fill="none" stroke="#63666c" stroke-width="3.5"/><path d="M2242.1 58.2L2249.2 65.8L2262 52.3" fill="none" stroke="#63666c" stroke-width="3.6" /><circle cx="2339.6" cy="50" r="4.2" fill="none" stroke="#63666c" stroke-width="3.2"/><circle cx="2322" cy="60" r="4.2" fill="none" stroke="#63666c" stroke-width="3.2"/><circle cx="2339.6" cy="70" r="4.2" fill="none" stroke="#63666c" stroke-width="3.2"/><path d="M2325.8 57.8L2335.8 52.2M2325.8 62.2L2335.8 67.8" fill="none" stroke="#63666c" stroke-width="3.2" /><circle cx="2412" cy="59.8" r="16.3" fill="none" stroke="#63666c" stroke-width="3.5"/><path d="M2407.8 55.3Q2407.8 50.8 2412.3 50.8Q2416.8 50.8 2416.8 55Q2416.6 57.3 2414.3 58.8Q2412.2 60.2 2412.2 63" fill="none" stroke="#63666c" stroke-width="3.2" /><circle cx="2412.2" cy="68.2" r="2" fill="#63666c"/><path d="M2807.5 54.5L2818 65L2828.5 54.5" fill="none" stroke="#fff" stroke-width="3.8" /><circle cx="2921.3" cy="49" r="4.1" fill="#5f6268"/><circle cx="2921.3" cy="60" r="4.1" fill="#5f6268"/><circle cx="2921.3" cy="72" r="4.1" fill="#5f6268"/><path d="M862 278.8L872.9 289.3L883.8 278.8" fill="none" stroke="#a6a9ae" stroke-width="3.4" /><path d="M1271 278.8L1281.9 289.3L1292.8 278.8" fill="none" stroke="#a6a9ae" stroke-width="3.4" /><circle cx="1403.2" cy="272" r="4.1" fill="#5f6268"/><circle cx="1403.2" cy="284" r="4.1" fill="#5f6268"/><circle cx="1403.2" cy="296" r="4.1" fill="#5f6268"/><circle cx="2749.5" cy="633" r="32" fill="#d5dcf6"/><line x1="952.6" y1="633" x2="2737" y2="633" stroke="#2d4fe0" stroke-width="3.4" stroke-dasharray="6 6"/><circle cx="940.3" cy="633" r="7.95" fill="#fff" stroke="#2d4fe0" stroke-width="3.9"/><circle cx="1845" cy="633" r="7.95" fill="#fff" stroke="#2d4fe0" stroke-width="3.9"/><circle cx="2749.5" cy="633" r="10.5" fill="#fff" style="filter:drop-shadow(1px 1.5px 1px rgba(0,0,0,0.35))"/><circle cx="2749.5" cy="633" r="7" fill="#2d4fe0"/><path d="M712 955.1H740.4L729.9 968.2V987.8L721.9 981.2V968.2Z" fill="none" stroke="#5f6268" stroke-width="3.3" stroke-linejoin="round"/><circle cx="1968.3" cy="1102.5" r="14" fill="none" stroke="#b3b6bb" stroke-width="3"/><circle cx="1968.3" cy="1096" r="2.3" fill="#b3b6bb"/><path d="M1968.3 1101.5V1109" fill="none" stroke="#b3b6bb" stroke-width="4.2" stroke-linecap="round"/><circle cx="2550.8" cy="1102.5" r="14" fill="none" stroke="#b3b6bb" stroke-width="3"/><circle cx="2550.8" cy="1096" r="2.3" fill="#b3b6bb"/><path d="M2550.8 1101.5V1109" fill="none" stroke="#b3b6bb" stroke-width="4.2" stroke-linecap="round"/><circle cx="2926" cy="1102.5" r="14" fill="none" stroke="#b3b6bb" stroke-width="3"/><circle cx="2926" cy="1096" r="2.3" fill="#b3b6bb"/><path d="M2926 1101.5V1109" fill="none" stroke="#b3b6bb" stroke-width="4.2" stroke-linecap="round"/></svg>
</body></html>
